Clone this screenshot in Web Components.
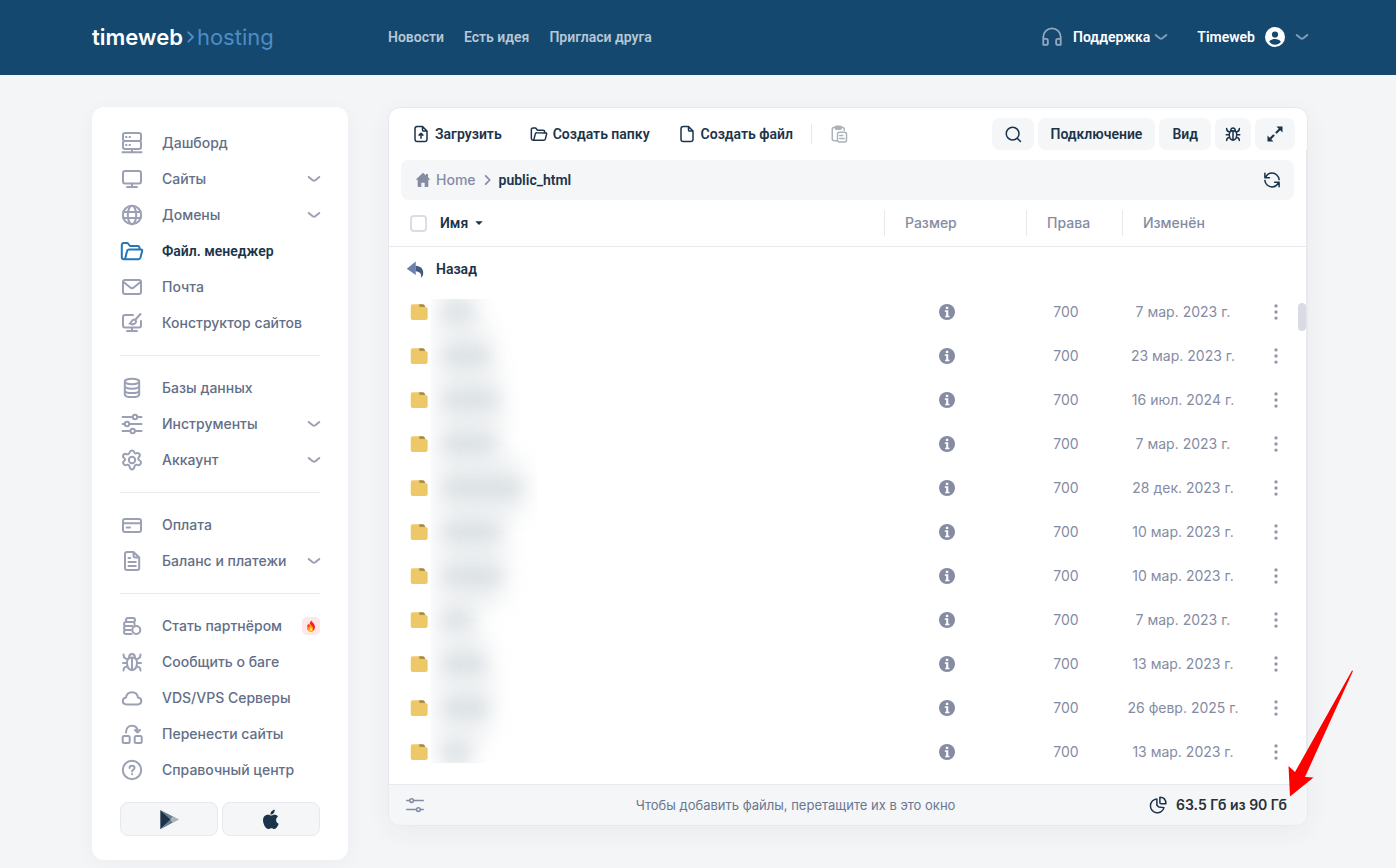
<!DOCTYPE html>
<html lang="ru">
<head>
<meta charset="utf-8">
<meta name="viewport" content="width=device-width, initial-scale=1">
<title>Timeweb — файловый менеджер</title>
<style>
  :root {
    --navy: #15486f;
    --ink: #1b3449;
    --menu: #636e87;
    --muted: #858ba3;
    --icon: #9ba0b4;
    --line: #e7e9ef;
    --soft: #f4f6f8;
    --accent: #2376b9;
    --strong: 600 14px/20px Roboto, "Noto Sans", sans-serif;
  }
  body {
    margin: 0;
    background: #f4f5f7;
    color: var(--ink);
    font: 500 14px/20px Inter, "Noto Sans", sans-serif;
  }
</style>
</head>
<body>
<hosting-app></hosting-app>
<script>
const ICONS = {
  dashboard: '<rect x="3" y="2" width="18" height="8" rx="2"/><rect x="3" y="10" width="18" height="8" rx="2"/><path d="M12 18v3.5M2.5 21.2h19M6 6h.5M9.5 6h.5M6 14h.5M9.5 14h.5"/>',
  monitor: '<rect x="3" y="4" width="18" height="12.5" rx="2"/><path d="M12 16.5v3.5M7 20h10"/>',
  globe: '<circle cx="12" cy="12" r="9.2"/><ellipse cx="12" cy="12" rx="4.2" ry="9.2"/><path d="M3.5 9h17M3.5 15h17"/>',
  folder: '<path d="M5 20.2H4a2.2 2.2 0 0 1-2.2-2.2V6A2 2 0 0 1 4 4h3.6L10 7h7.5A2 2 0 0 1 19.5 9v1.3M5 20.2 7 12.2a2 2 0 0 1 2-1.7h12.2a1 1 0 0 1 1 1.3l-1.8 7a2 2 0 0 1-2 1.4z"/>',
  mail: '<rect x="3" y="5" width="18" height="14" rx="2"/><path d="m3.5 7 6.5 5.3a3 3 0 0 0 4 0L20.5 7"/>',
  builder: '<path d="M13 4H5a2 2 0 0 0-2 2v8.5a2 2 0 0 0 2 2h14a2 2 0 0 0 2-2V10M12 16.5V20M7 20h10M20.5 3l-5 5.5M9.500 12.7c2 0 1.2-3.5 4-4 2-.3 3.3 1.5 2.2 3-1.4 1.9-4.5 1.7-6.2 1z"/>',
  database: '<ellipse cx="12" cy="5.5" rx="7.2" ry="2.7"/><path d="M4.8 5.5v12.7c0 1.7 3.2 2.9 7.2 2.9s7.2-1.2 7.2-2.9V5.5M4.8 9.8c0 1.7 3.2 2.9 7.2 2.9s7.2-1.2 7.2-2.9M4.8 14.2c0 1.7 3.2 2.9 7.2 2.9s7.2-1.2 7.2-2.9"/>',
  sliders: '<path d="M2.5 5h10M17.5 5h4M2.5 12h2.3M9.4 12h12.1M2.5 19h7.8M15 19h6.5"/><circle cx="15" cy="5" r="2.2"/><circle cx="7" cy="12" r="2.2"/><circle cx="12.7" cy="19" r="2.2"/>',
  gear: '<circle cx="12" cy="12" r="3.2"/><path d="M9.7 4.2C10 2.7 10.7 2.4 12 2.4s2 .3 2.3 1.8c.3 1.1 1.2 1.5 2.2 1 1.5-.7 2.3-.2 3 .9.7 1.2.7 2-.5 3-.9.8-.9 1.6-.6 2.3.2.6 1.5 1 2.2 1.9.7 1 .3 2.2-.3 3-.8 1.2-1.6 1.2-2.9.6-1.2-.5-2.2-.1-2.8 1.3-.4 1.7-1 3.2-2.6 3.2-1.5 0-2.1-1.5-2.5-3-.5-1.5-1.6-2-2.9-1.5-1.5.6-2.3.3-3-.9-.7-1.1-.6-2.2.7-3.2 1-.8 1-1.8 0-2.6-1.4-1.1-1.7-2-1-3.2.8-1.3 1.5-1.5 3-.8 1.3.5 2.9-.3 3.4-2z"/>',
  card: '<rect x="3" y="6" width="18" height="13" rx="2"/><path d="M3 10.2h18M6.7 14.5H10"/>',
  doc: '<path d="M13.5 3H7a2 2 0 0 0-2 2v14a2 2 0 0 0 2 2h10.2a2 2 0 0 0 2-2V8.5zM13.5 3v3.5a2 2 0 0 0 2 2h3.7M8.500 9h1.8M8.5 13h7.3M8.5 17h7.3"/>',
  coins: '<rect x="6" y="4" width="9" height="4" rx="2"/><path d="M12.5 12H6a2 2 0 0 1 0-4h7a2 2 0 0 1 1.5 2.6M11 16H6a2 2 0 0 1 0-4M11.5 20H6a2 2 0 0 1 0-4"/><circle cx="16.3" cy="16" r="4"/>',
  bug: '<path d="M12 7.5c3.3 0 5 1.8 5 5.2 0 4-1.8 7-5 7.5-3.2-.5-5-3.5-5-7.5 0-3.4 1.7-5.2 5-5.2zM12 8v12M9 7.7C9 5 10 4 12 4s3 1 3 3.7M3.5 4.5c0 2.5 1 4.2 4 4.5M20.5 4.5c0 2.5-1 4.2-4 4.5M3 13h4M17 13h4M3.5 20.5c0-2.6 1.2-3.8 4-4M20.5 20.5c0-2.6-1.2-3.8-4-4"/>',
  cloud: '<path d="M6.7 18.4h11A3.6 3.6 0 0 0 21.3 15c0-1.9-1.4-3.3-3.3-3.5C17.5 8.5 15.3 6.2 12 6.2c-3.2 0-5.5 2.1-6 5.2C4 11.7 2.8 13.2 2.8 15c0 2 1.7 3.4 3.9 3.4z"/>',
  transfer: '<rect x="2.7" y="14" width="7" height="7" rx="1.5"/><rect x="14.7" y="14" width="7" height="7" rx="1.5"/><path d="M6 10.5C6 6.5 8.3 3.7 12 3.7s5.5 2.3 5.5 5.8M15 8l2.5 2.5L20 8"/>',
  help: '<circle cx="12" cy="12" r="9.2"/><path d="M9.6 10c0-1.4 1-2.3 2.4-2.3s2.5.9 2.5 2.2c0 1.7-2.4 1.8-2.4 3.5M12.1 16v.2"/>',
  chevron: '<path d="m6.7 10 4 3.3c.8.6 1.8.6 2.6 0l4-3.3"/>',
  support: '<path d="M2.5 20.5V12a9.5 9.5 0 0 1 19 0v8.5M2.5 14h3.3c1 0 1.7.7 1.7 1.7v3c0 1-.7 1.8-1.7 1.8H2.5zM21.5 14h-3.3c-1 0-1.7.7-1.7 1.7v3c0 1 .7 1.8 1.7 1.8h3.3z"/>',
  user: '<circle cx="12" cy="12" r="12" fill="currentColor" stroke="none"/><circle cx="12" cy="9" r="3.7" fill="#15486f" stroke="none"/><path d="M5 17.7c1.2-2.2 4-3.2 7-3.2s5.8 1 7 3.2c-1.7 2.2-4.1 3.5-7 3.5s-5.3-1.3-7-3.5z" fill="#15486f" stroke="none"/>',
  upload: '<path d="M14 2H7a3 3 0 0 0-3 3v14a3 3 0 0 0 3 3h10a3 3 0 0 0 3-3V8zM14 2v4.500A1.500 1.500 0 0 0 15.500 8H20M12 17.500V12M9.500 13.500 12 11l2.500 2.500"/>',
  file: '<path d="M14 2H7a3 3 0 0 0-3 3v14a3 3 0 0 0 3 3h10a3 3 0 0 0 3-3V8zM14 2v4.500A1.500 1.500 0 0 0 15.500 8H20"/>',
  paste: '<path d="M9 21H6a3 3 0 0 1-3-3V6a3 3 0 0 1 3-3h10a3 3 0 0 1 3 3v1M13 14h4M13 18h6"/><rect x="7" y="1.5" width="8" height="4" rx="1.5" fill="currentColor"/><rect x="10" y="9.5" width="12" height="13" rx="2.5"/>',
  search: '<circle cx="11.5" cy="11.5" r="8.5"/><path d="m18 18 4 4"/>',
  expand: '<path d="M14 10l6-6M10 14l-6 6" stroke-width="2.8"/><path d="M14 2h8v8zM2 14v8h8z" fill="currentColor" stroke="none"/>',
  home: '<path d="M12 1 1 11.5h3V21a1.5 1.5 0 0 0 1.5 1.5h4V16h5v6.5h4A1.5 1.5 0 0 0 20 21v-9.5h3L19.5 8V3h-3v2.3z" fill="currentColor" stroke="none"/>',
  crumb: '<path d="m8 5 7 7-7 7"/>',
  refresh: '<path d="M2.5 3v6h6M3.5 8.5C5 5 8 2.8 12 2.8c5 0 9 3.7 9.5 8.7M21.5 21v-6h-6M20.5 15.5C19 19 16 21.2 12 21.2c-5 0-9-3.7-9.5-8.7"/>',
  caret: '<path d="M3 8h18l-9 9z" fill="currentColor" stroke="none"/>',
  back: '<path d="M13 2 1 11.5 13 20z" fill="#6b80ae" stroke="none"/><path d="M13 7.5c6 .5 10 3.5 10 9.5 0 3-1 5.5-3 6.5 1-5-1.5-8-7-8.5z" fill="#465981" stroke="none"/>',
  dir: '<path d="M4 1.5h12l7.5 5.5v13c0 1.5-1 2.5-2.5 2.5H3.5C2 22.5 1 21.5 1 20V4.5c0-2 1-3 3-3z" fill="#ecc869" stroke="none"/><path d="M12 1.5h5.5c1.5 0 2.5 1.5 2.5 3.7h-5.5c-1.5 0-2-.7-2.5-3.7z" fill="#aa8d42" stroke="none"/>',
  info: '<circle cx="12" cy="12" r="12" fill="currentColor" stroke="none"/><path d="M10.3 4.3h3.6v3.3h-3.6zM8.7 9.5h5.2v8.3h1.7V20H9.2v-2.2h1.6v-6H8.7z" fill="#fff" stroke="none"/>',
  dots: '<circle cx="12" cy="4.7" r="2" fill="currentColor" stroke="none"/><circle cx="12" cy="12" r="2" fill="currentColor" stroke="none"/><circle cx="12" cy="19.3" r="2" fill="currentColor" stroke="none"/>',
  settings: '<path d="M1 6h3.5M10.5 6H23M1 18h12.5M19.5 18H23"/><circle cx="7.5" cy="6" r="2.5"/><circle cx="16.5" cy="18" r="2.5"/>',
  pie: '<path d="M10.5 4A9.2 9.2 0 1 0 20 15.5l-7-.8-2.5-2.5zM14.5 1.8v7a1.5 1.5 0 0 0 1.5 1.5h6.5c0-5-3-8.5-8-8.5z"/>',
  play: '<g stroke="none"><path d="M1.5 1v22L14 12z" fill="#1b3449"/><path d="m1.5 1 14.5 7.5-3 3.5z" fill="#6a7b89"/><path d="m1.5 23 14.5-7.5-3-3.5z" fill="#6a7b89"/><path d="m16 8.3 7 3.7-7 3.7-3.2-3.7z" fill="#a9b3bb"/></g>',
  apple: '<path d="M16.7 12.8c0-2.3 1.9-3.4 2-3.5-1.1-1.6-2.8-1.8-3.4-1.8-1.4-.2-2.8.8-3.5.8s-1.8-.8-3-.8C6 7.5 3.4 9.3 3.4 13.3c0 3.8 2.7 9.2 5.3 9.2 1.2 0 1.7-.8 3.2-.8s1.9.8 3.2.8c1.800 0 3.6-3 4.300-5.4-.1 0-2.7-1-2.7-4.300zM14.2 5.8c.8-1 1.3-2.3 1.1-3.6-1.1 0-2.4.7-3.2 1.7-.7.8-1.3 2.1-1.1 3.4 1.2.1 2.5-.6 3.2-1.5z" transform="translate(-1.5 -1.5) scale(1.12 1.08)" fill="currentColor" stroke="none"/>',
  fire: '<g stroke="none"><path d="M13 1c1 4 7 6.5 7 13 0 5-3.5 9-8 9s-8-3.5-8-8.5c0-3 1.5-5 3-7 .2 1.5.8 2.5 2 3C9 7 10 3.5 13 1z" fill="#f5222d"/><path d="M5 11c2 .5 1.5 3 3 4 1-2.5 1-5 3.5-7 .2 4 5 5 5 9.5 0 3-2 5.5-4.5 5.5-4 0-7.5-3-7.5-8 0-1.5 0-2.8.5-4z" fill="#ff9f0a"/><path d="M12 14c.5 2 2.5 2.5 2.5 5 0 2-1 3.5-2.7 3.5S9 21 9 19c0-2 2-3 3-5z" fill="#ffe14d"/></g>'
};

const component = (name, markup, setup) => {
  const template = document.createElement('template');
  template.innerHTML = markup;
  customElements.define(name, class extends HTMLElement {
    constructor() {
      super();
      this.attachShadow({ mode: 'open' }).append(template.content.cloneNode(true));
    }
    connectedCallback() {
      if (setup) setup(this, this.shadowRoot);
    }
  });
};

component('ui-icon', `
  <style>
    :host { display: block; flex: none; width: var(--size, 24px); height: var(--size, 24px); }
    svg { display: block; width: 100%; height: 100%; fill: none; stroke: currentColor;
          stroke-width: var(--stroke, 2); stroke-linecap: round; stroke-linejoin: round; }
  </style>
  <svg viewBox="0 0 24 24" aria-hidden="true"></svg>`,
  (el, root) => { root.querySelector('svg').innerHTML = ICONS[el.getAttribute('name')]; });

component('app-header', `
  <style>
    :host { display: block; background: var(--navy); color: #fff; padding: 0 88px 0 92px; font: var(--strong); }
    header { display: flex; align-items: center; height: 74px; padding-bottom: 1px; }
    a, button { color: inherit; text-decoration: none; font: inherit; }
    .logo { display: flex; align-items: center; flex: none; width: 296px; font: 600 22px/24px Inter, sans-serif; }
    .logo ui-icon { --size: 16px; --stroke: 3; color: #4d8dc3; margin-right: -2px; }
    .logo .sub { color: #4d8dc3; font-weight: 400; }
    nav { display: flex; gap: 20px; color: #b6c7d5; flex: 1; }
    button { display: flex; align-items: center; border: 0; background: none; padding: 0; }
    .chev { color: #7f9db5; margin: 0 -6px; }
    .support { margin-right: 30px; }
    .support ui-icon:first-child { --size: 22px; color: #8fa9be; margin-right: 10px; }
    .support .chev { margin-left: -1px; }
    .user ui-icon:nth-of-type(1) { --size: 20px; margin: 0 11px 0 10px; }
  </style>
  <header>
    <a class="logo" href="#"><span>timeweb</span><ui-icon name="crumb"></ui-icon><span class="sub">hosting</span></a>
    <nav><a href="#">Новости</a><a href="#">Есть идея</a><a href="#">Пригласи друга</a></nav>
    <button class="support" type="button"><ui-icon name="support"></ui-icon>Поддержка<ui-icon class="chev" name="chevron"></ui-icon></button>
    <button class="user" type="button">Timeweb<ui-icon name="user"></ui-icon><ui-icon class="chev" name="chevron"></ui-icon></button>
  </header>`);

component('nav-item', `
  <style>
    :host { display: block; color: var(--menu); }
    a { display: flex; align-items: center; height: 36px; color: inherit; text-decoration: none; }
    .icon { color: var(--icon); margin-right: 18px; }
    .label { flex: 1; white-space: nowrap; }
    .chev { color: var(--icon); margin-right: -6px; }
    :host([active]) { color: var(--ink); font: var(--strong); }
    :host([active]) .icon { color: var(--accent); }
  </style>
  <a href="#"><ui-icon class="icon"></ui-icon><span class="label"><slot></slot></span><slot name="end"></slot></a>`,
  (el, root) => {
    const icon = document.createElement('ui-icon');
    icon.className = 'icon';
    icon.setAttribute('name', el.getAttribute('icon'));
    root.querySelector('.icon').replaceWith(icon);
    if (el.hasAttribute('expandable')) {
      root.querySelector('a').insertAdjacentHTML('beforeend', '<ui-icon class="chev" name="chevron"></ui-icon>');
    }
  });

component('nav-group', `
  <style>
    :host { display: block; border-bottom: 1px solid var(--line); padding-bottom: 14px; margin-bottom: 14px; }
    :host([last]) { border: 0; margin: 0; }
  </style>
  <slot></slot>`);

component('side-nav', `
  <style>
    :host { display: block; background: #fff; border-radius: 12px; padding: 18px 28px 24px; box-shadow: 0 4px 20px rgba(30, 50, 80, .04); }
    .hot { display: grid; place-items: center; width: 18px; height: 18px; border-radius: 5px; background: #fde7e7; --size: 12px; }
    .stores { display: grid; grid-template-columns: 1fr 1fr; gap: 4px; }
    .stores a { display: grid; place-items: center; height: 32px; border: 1px solid var(--line); border-radius: 8px; background: var(--soft); color: var(--ink); --size: 21px; }
  </style>
  <nav>
    <nav-group>
      <nav-item icon="dashboard">Дашборд</nav-item>
      <nav-item icon="monitor" expandable>Сайты</nav-item>
      <nav-item icon="globe" expandable>Домены</nav-item>
      <nav-item icon="folder" active>Файл. менеджер</nav-item>
      <nav-item icon="mail">Почта</nav-item>
      <nav-item icon="builder">Конструктор сайтов</nav-item>
    </nav-group>
    <nav-group>
      <nav-item icon="database">Базы данных</nav-item>
      <nav-item icon="sliders" expandable>Инструменты</nav-item>
      <nav-item icon="gear" expandable>Аккаунт</nav-item>
    </nav-group>
    <nav-group>
      <nav-item icon="card">Оплата</nav-item>
      <nav-item icon="doc" expandable>Баланс и платежи</nav-item>
    </nav-group>
    <nav-group last>
      <nav-item icon="coins">Стать партнёром<span slot="end" class="hot"><ui-icon name="fire"></ui-icon></span></nav-item>
      <nav-item icon="bug">Сообщить о баге</nav-item>
      <nav-item icon="cloud">VDS/VPS Серверы</nav-item>
      <nav-item icon="transfer">Перенести сайты</nav-item>
      <nav-item icon="help">Справочный центр</nav-item>
    </nav-group>
  </nav>
  <div class="stores">
    <a href="#" aria-label="Google Play"><ui-icon name="play"></ui-icon></a>
    <a href="#" aria-label="App Store"><ui-icon name="apple"></ui-icon></a>
  </div>`);

component('tool-button', `
  <style>
    :host { display: block; flex: none; --size: 18px; --pad: 13px; }
    button { display: flex; align-items: center; justify-content: center; gap: 5px; height: 32px; width: 100%; padding: 0;
             border: 0; border-radius: 8px; background: none; color: inherit; font: var(--strong); white-space: nowrap; }
    :host([filled]) button { background: var(--soft); padding: 0 var(--pad); }
    :host([size="s"]) { --pad: 9px; }
    :host([size="m"]) { --pad: 11px; }
    :host([size="l"]) { --pad: 12px; }
    :host([disabled]) { color: #abb2b9; }
  </style>
  <button type="button"><slot></slot></button>`,
  (el, root) => {
    const button = root.querySelector('button');
    button.disabled = el.hasAttribute('disabled');
    if (el.hasAttribute('label')) button.setAttribute('aria-label', el.getAttribute('label'));
  });

component('path-bar', `
  <style>
    :host { display: block; padding: 10px 12px 0; }
    nav { display: flex; align-items: center; height: 40px; padding: 0 13px 0 14px; border-radius: 8px; background: var(--soft); }
    a { display: flex; align-items: center; gap: 5px; color: var(--muted); text-decoration: none; --size: 16px; }
    .sep { --size: 14px; --stroke: 3; color: var(--muted); margin: 0 4px 0 5px; }
    .here { flex: 1; font: var(--strong); }
    button { border: 0; padding: 0; background: none; color: var(--ink); --size: 18px; }
  </style>
  <nav aria-label="Путь">
    <a href="#"><ui-icon name="home"></ui-icon>Home</a>
    <ui-icon class="sep" name="crumb"></ui-icon>
    <span class="here">public_html</span>
    <button type="button" aria-label="Обновить"><ui-icon name="refresh"></ui-icon></button>
  </nav>`);

const FILES = [
  [34, '7 мар. 2023 г.'], [50, '23 мар. 2023 г.'], [58, '16 июл. 2024 г.'], [56, '7 мар. 2023 г.'],
  [82, '28 дек. 2023 г.'], [60, '10 мар. 2023 г.'], [62, '10 мар. 2023 г.'], [32, '7 мар. 2023 г.'],
  [46, '13 мар. 2023 г.'], [48, '26 февр. 2025 г.'], [30, '13 мар. 2023 г.']
];

component('file-table', `
  <style>
    :host { display: block; position: relative; padding-bottom: 10px; }
    table { width: 100%; border-collapse: separate; border-spacing: 0; table-layout: fixed; }
    th, td { padding: 0; text-align: left; font-weight: inherit; }
    .size { width: 142px; } .mode { width: 96px; } .date { width: 138px; } .menu { width: 46px; }
    thead th { height: 46px; border-bottom: 1px solid var(--line); color: var(--muted); }
    .split { border-left: 1px solid var(--line); line-height: 26px; padding-left: 20px; }
    .lead { display: flex; align-items: center; }
    .head { color: var(--ink); gap: 13px; padding-left: 21px; }
    .head label { display: flex; }
    .head button { display: flex; align-items: center; gap: 6px; border: 0; padding: 0; background: none; color: inherit; font: var(--strong); --size: 10px; }
    input { appearance: none; box-sizing: border-box; width: 17px; height: 17px; margin: 0; border: 2px solid #dadde7; border-radius: 4px; background: #fff; }
    .up { height: 43px; padding-left: 17px; --size: 18px; }
    .up a { display: flex; align-items: center; gap: 12px; color: var(--ink); text-decoration: none; font: var(--strong); }
    tbody td { color: var(--muted); font-weight: 400; }
    .name { height: 44px; padding-left: 21px; --size: 18px; }
    .veil { position: relative; align-self: stretch; width: 106px; margin-left: 3px; clip-path: inset(-24px 0 -24px 0); }
    .first .veil { clip-path: inset(9px 0 -24px 0); }
    .last .veil { clip-path: inset(-24px 0 11px 0); }
    .veil::before, .veil::after { content: ""; position: absolute; left: 10px; width: var(--w); border-radius: 10px; }
    .veil::before { top: -4px; height: 52px; background: #e8ebed; filter: blur(13px); }
    .veil::after { top: 15px; height: 14px; background: #cbd5da; opacity: .55; filter: blur(8px); }
    .mid { padding-right: 16px; text-align: center; }
    .mid button { display: flex; margin: 0 auto; border: 0; padding: 0; background: none; color: var(--muted); --size: 16px; }
    .more { padding-right: 14px; }
    .more button { color: #9297aa; --size: 20px; }
    .thumb { position: absolute; top: 103px; right: 0; width: 8px; height: 28px; border-radius: 4px; background: #d9dae4; }
  </style>
  <table>
    <colgroup><col><col class="size"><col class="mode"><col class="date"><col class="menu"></colgroup>
    <thead>
      <tr>
        <th scope="col"><div class="lead head"><label><input type="checkbox" aria-label="Выбрать все"></label><button type="button">Имя<ui-icon name="caret"></ui-icon></button></div></th>
        <th scope="col"><div class="split">Размер</div></th>
        <th scope="col"><div class="split">Права</div></th>
        <th scope="col"><div class="split">Изменён</div></th>
        <th></th>
      </tr>
    </thead>
    <tbody>
      <tr><td colspan="5"><div class="lead up"><a href="#"><ui-icon name="back"></ui-icon>Назад</a></div></td></tr>
    </tbody>
  </table>
  <div class="thumb"></div>`,
  (el, root) => {
    root.querySelector('tbody').insertAdjacentHTML('beforeend', FILES.map(([width, date], i) => `
      <tr class="${i === 0 ? 'first' : i === FILES.length - 1 ? 'last' : ''}">
        <td><div class="lead name"><ui-icon name="dir"></ui-icon><span class="veil" style="--w:${width}px"></span></div></td>
        <td class="mid"><button type="button" aria-label="Посчитать размер"><ui-icon name="info"></ui-icon></button></td>
        <td class="mid">700</td>
        <td class="mid">${date}</td>
        <td class="mid more"><button type="button" aria-label="Действия"><ui-icon name="dots"></ui-icon></button></td>
      </tr>`).join(''));
  });

component('file-manager', `
  <style>
    :host { display: block; position: relative; border: 1px solid var(--line); border-radius: 12px; background: #fff; box-shadow: 0 6px 24px rgba(30, 50, 80, .05); }
    .tools { display: flex; align-items: center; gap: 4px; padding: 10px 12px 0 23px; }
    .make { display: flex; align-items: center; gap: 28px; flex: 1; }
    .rule { width: 1px; height: 20px; background: var(--line); margin: 0 -10px; }
    .list { border-right: 1px solid var(--line); }
    footer { display: flex; align-items: center; height: 40px; padding: 0 20px 0 17px; border-top: 1px solid var(--line); border-radius: 0 0 11px 11px; background: var(--soft); }
    footer button { border: 0; padding: 0; background: none; color: var(--muted); --size: 18px; }
    .hint { flex: 1; padding-left: 18px; text-align: center; font-size: 13px; font-weight: 400; color: #6a7690; }
    .disk { display: flex; align-items: center; gap: 9px; font-weight: 600; color: #2a3036; --size: 18px; }
    .disk ui-icon { color: var(--ink); }
    .arrow { position: absolute; right: -47px; bottom: 28px; width: 66px; height: 127px; fill: #f00; pointer-events: none; }
  </style>
  <div class="tools">
    <div class="make">
      <tool-button><ui-icon name="upload"></ui-icon>Загрузить</tool-button>
      <tool-button><ui-icon name="folder"></ui-icon>Создать папку</tool-button>
      <tool-button><ui-icon name="file"></ui-icon>Создать файл</tool-button>
      <span class="rule"></span>
      <tool-button disabled label="Вставить"><ui-icon name="paste"></ui-icon></tool-button>
    </div>
    <tool-button filled size="l" label="Поиск"><ui-icon name="search"></ui-icon></tool-button>
    <tool-button filled>Подключение</tool-button>
    <tool-button filled>Вид</tool-button>
    <tool-button filled size="s" label="Сообщить о баге"><ui-icon name="bug"></ui-icon></tool-button>
    <tool-button filled size="m" label="На весь экран"><ui-icon name="expand"></ui-icon></tool-button>
  </div>
  <div class="list">
    <path-bar></path-bar>
    <file-table></file-table>
  </div>
  <footer>
    <button type="button" aria-label="Настройки"><ui-icon name="settings"></ui-icon></button>
    <span class="hint">Чтобы добавить файлы, перетащите их в это окно</span>
    <span class="disk"><ui-icon name="pie"></ui-icon>63.5 Гб из 90 Гб</span>
  </footer>
  <svg class="arrow" viewBox="0 0 66 127" aria-hidden="true"><path d="M64 0.5 65 1 17 107 25.5 107.5 2 126.5 0.5 96 7 102z"/></svg>`);

component('hosting-app', `
  <style>
    :host { display: block; }
    main { display: grid; grid-template-columns: 256px minmax(0, 1fr); gap: 40px; align-items: start; padding: 32px 88px 8px 92px; }
  </style>
  <app-header></app-header>
  <main>
    <side-nav></side-nav>
    <file-manager></file-manager>
  </main>`);
</script>
</body>
</html>
